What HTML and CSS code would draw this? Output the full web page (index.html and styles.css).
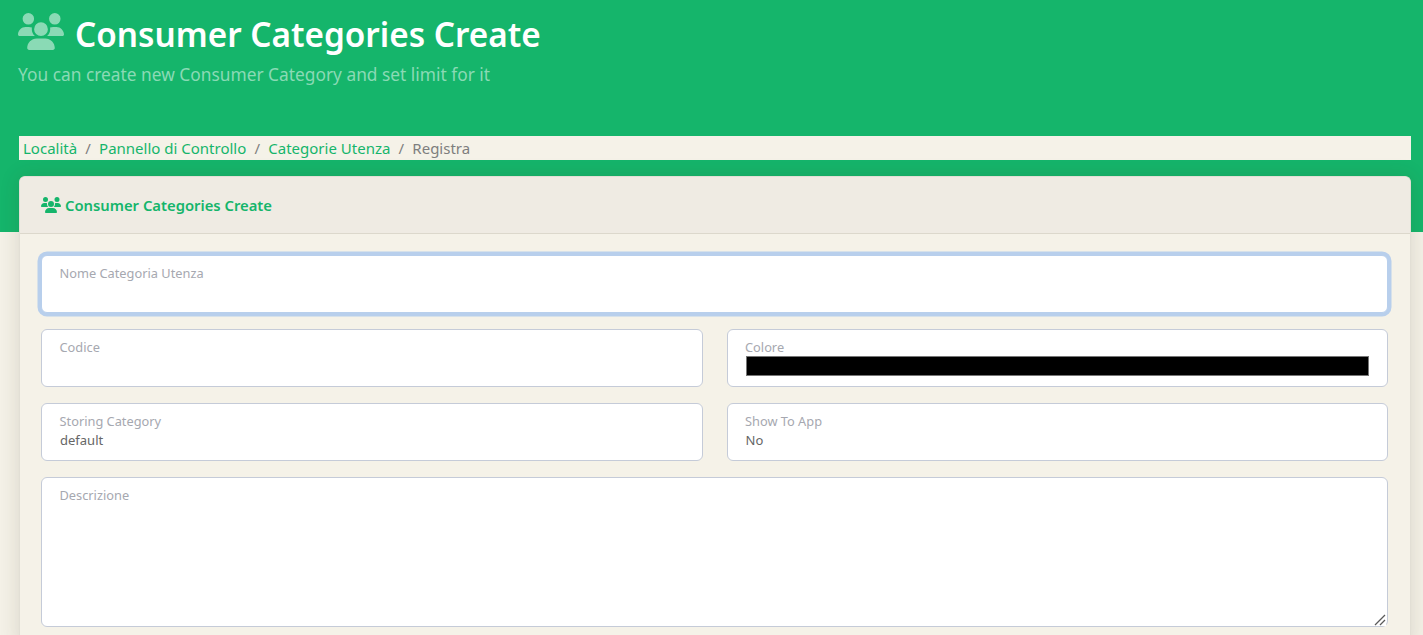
FILE: index.html
```html
<!DOCTYPE html>
<html lang="it">
<head>
    <meta charset="UTF-8">
    <meta name="viewport" content="width=device-width, initial-scale=1.0">
    <title>Consumer Categories Create</title>
    <link rel="stylesheet" href="styles.css">
</head>
<body>
    <svg class="icon-defs" width="0" height="0" aria-hidden="true">
        <symbol id="icon-users" viewBox="0 0 640 512">
            <path d="M144 0a80 80 0 1 1 0 160A80 80 0 1 1 144 0zM512 0a80 80 0 1 1 0 160A80 80 0 1 1 512 0zM0 298.7C0 239.8 47.8 192 106.7 192h42.7c15.9 0 31 3.5 44.6 9.7c-1.3 7.2-1.9 14.7-1.9 22.3c0 38.2 16.8 72.5 43.3 96c-.2 0-.4 0-.7 0H21.3C9.6 320 0 310.4 0 298.7zM405.3 320c-.2 0-.4 0-.7 0c26.6-23.5 43.3-57.8 43.3-96c0-7.6-.7-15-1.9-22.3c13.6-6.3 28.7-9.7 44.6-9.7h42.7C592.2 192 640 239.8 640 298.7c0 11.8-9.6 21.3-21.3 21.3H405.3zM224 224a96 96 0 1 1 192 0 96 96 0 1 1 -192 0zM128 485.3C128 411.7 187.7 352 261.3 352H378.7C452.3 352 512 411.7 512 485.3c0 14.7-11.9 26.7-26.7 26.7H154.7c-14.7 0-26.7-11.9-26.7-26.7z"/>
        </symbol>
    </svg>

    <header class="page-header">
        <div class="page-title">
            <svg class="title-icon"><use href="#icon-users"></use></svg>
            <h1 class="title-text">Consumer Categories Create</h1>
        </div>
        <p class="subtitle">You can create new Consumer Category and set limit for it</p>
        <nav class="breadcrumb">
            <a href="#">Località</a>
            <span class="divider">/</span>
            <a href="#">Pannello di Controllo</a>
            <span class="divider">/</span>
            <a href="#">Categorie Utenza</a>
            <span class="divider">/</span>
            <span class="current">Registra</span>
        </nav>
    </header>

    <main class="card">
        <div class="card-header">
            <svg class="card-icon"><use href="#icon-users"></use></svg>
            <h2 class="card-title">Consumer Categories Create</h2>
        </div>
        <form class="card-body">
            <div class="field field-wide">
                <input type="text" class="control control-focus" id="name" placeholder=" ">
                <label class="field-label" for="name">Nome Categoria Utenza</label>
            </div>
            <div class="field">
                <input type="text" class="control" id="code" placeholder=" ">
                <label class="field-label" for="code">Codice</label>
            </div>
            <div class="field">
                <input type="color" class="control control-color" id="color" value="#000000">
                <label class="field-label" for="color">Colore</label>
            </div>
            <div class="field">
                <input type="text" class="control" id="storing" value="default">
                <label class="field-label" for="storing">Storing Category</label>
            </div>
            <div class="field">
                <input type="text" class="control" id="show" value="No">
                <label class="field-label" for="show">Show To App</label>
            </div>
            <div class="field field-wide">
                <textarea class="control control-area" id="description"></textarea>
                <label class="field-label" for="description">Descrizione</label>
                <svg class="area-grip" viewBox="0 0 12 12" aria-hidden="true">
                    <path d="M1 11 11 1M6 11l5-5"/>
                </svg>
            </div>
        </form>
    </main>
</body>
</html>
```

FILE: styles.css
```css
* {
    box-sizing: border-box;
}

html {
    overflow: hidden;
}

body {
    font-family: 'Segoe UI', 'Noto Sans', sans-serif;
    background-color: #f4f1e7;
    margin: 0;
    padding: 0;
    color: #666;
}

.icon-defs {
    display: block;
    position: absolute;
}

.page-header {
    height: 232px;
    background-color: #15b56b;
    padding: 13px 12px 0 18px;
}

.page-title {
    display: flex;
    align-items: center;
    gap: 11px;
    height: 37px;
}

.title-icon {
    width: 46px;
    height: 37px;
    fill: #8adab5;
}

.title-text {
    margin: 4px 0 0;
    font-size: 33.3px;
    font-weight: 600;
    line-height: 44px;
    color: #fff;
}

.subtitle {
    margin: 12px 0 0;
    font-size: 17.33px;
    line-height: 24px;
    color: #8adab5;
}

.breadcrumb {
    display: flex;
    align-items: center;
    gap: 8.2px;
    height: 24px;
    margin: 50px 0 0 1px;
    padding: 0 4px;
    background-color: #f5f2e8;
    font-size: 15px;
}

.breadcrumb a {
    color: #15b56b;
    text-decoration: none;
}

.divider,
.current {
    color: #7e7e7e;
}

.card {
    margin: -56px 12px 0 19px;
    background-color: #f5f2e8;
    border: 1px solid #e2dfd5;
    border-bottom: 0;
    border-radius: 6px 6px 0 0;
    box-shadow: 0 0 20px rgba(60, 50, 20, .14);
}

.card-header {
    display: flex;
    align-items: center;
    gap: 4px;
    height: 57px;
    padding: 0 21px;
    background-color: #efebe3;
    border-bottom: 1px solid #dcd8cc;
    border-radius: 5px 5px 0 0;
}

.card-icon {
    width: 20px;
    height: 16px;
    fill: #15b56b;
}

.card-title {
    margin: 0;
    font-size: 14.8px;
    font-weight: 600;
    color: #15b56b;
}

.card-body {
    display: grid;
    grid-template-columns: 1fr 1fr;
    gap: 16px 24px;
    padding: 21px 22px 22px 21px;
}

.field {
    position: relative;
}

.field-wide {
    grid-column: 1 / -1;
}

.control {
    display: block;
    width: 100%;
    height: 58px;
    padding: 26px 18px 10px;
    border: 1px solid #c5cbd8;
    border-radius: 6px;
    background-color: #fff;
    font-family: inherit;
    font-size: 13px;
    color: #666;
    outline: 0;
}

.control-focus {
    border-color: #b8cfec;
    box-shadow: 0 0 0 3.5px #b8cfec;
}

.control-color::-webkit-color-swatch-wrapper {
    padding: 0;
}

.control-color::-webkit-color-swatch {
    border: 1px solid #767676;
    border-radius: 0;
}

.control-area {
    height: 150px;
    resize: vertical;
}

.field-label {
    position: absolute;
    top: 9px;
    left: 18.5px;
    font-size: 12.8px;
    line-height: 18px;
    color: #a6a8b0;
}

.area-grip {
    position: absolute;
    right: 2px;
    bottom: 1px;
    width: 12px;
    height: 12px;
    background-color: #fff;
    fill: none;
    stroke: #5a5a5a;
    stroke-width: 1.3;
    pointer-events: none;
}
```
